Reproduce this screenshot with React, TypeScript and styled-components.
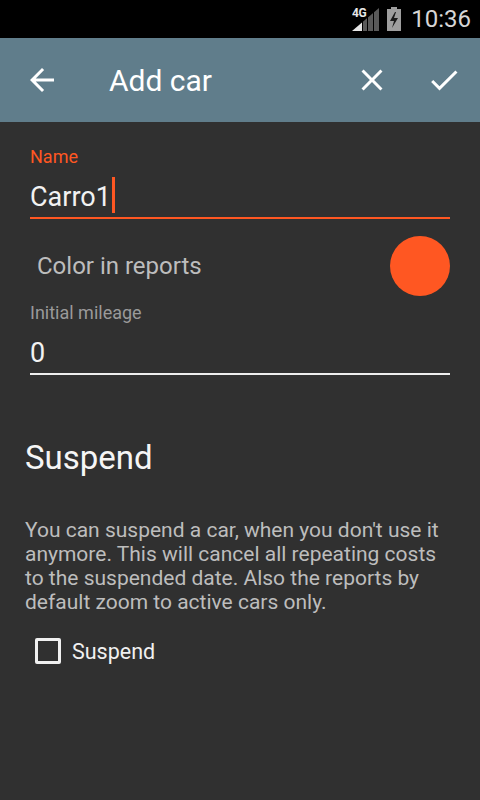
import styled, { createGlobalStyle } from 'styled-components';

const ACCENT = '#FF5722';

const GlobalStyle = createGlobalStyle`
  html, body {
    margin: 0;
    padding: 0;
    background: #303030;
  }
  body {
    font-family: Roboto, "Noto Sans", "Liberation Sans", sans-serif;
  }
`;

const Screen = styled.div`
  width: 480px;
  min-height: 800px;
  background: #303030;
  display: flex;
  flex-direction: column;
`;

const StatusBar = styled.div`
  height: 38px;
  background: #000;
  display: flex;
  align-items: center;
  justify-content: flex-end;
  padding-right: 9px;
  gap: 7px;
`;

const Clock = styled.span`
  color: #d6d6d6;
  font-size: 24px;
  margin-left: 3px;
`;

const Toolbar = styled.div`
  height: 84px;
  background: #607d8b;
  display: flex;
  align-items: center;
  padding: 0 18px 0 24px;
`;

const IconButton = styled.div<{ $gap?: number }>`
  width: 36px;
  height: 36px;
  display: flex;
  align-items: center;
  justify-content: center;
  margin-left: ${(p) => p.$gap ?? 0}px;
  svg {
    width: 36px;
    height: 36px;
    fill: #fff;
  }
`;

const Title = styled.h1`
  flex: 1;
  margin: 0 0 0 49px;
  font-size: 30px;
  font-weight: 400;
  color: #fff;
`;

const Content = styled.div`
  padding-top: 24px;
  display: flex;
  flex-direction: column;
`;

const Field = styled.div<{ $top?: number }>`
  margin: ${(p) => p.$top ?? 0}px 30px 0;
  display: flex;
  flex-direction: column;
`;

const FieldLabel = styled.label<{ $active?: boolean }>`
  font-size: 18px;
  line-height: 21px;
  color: ${(p) => (p.$active ? ACCENT : '#9a9a9a')};
`;

const FieldValue = styled.div<{ $active?: boolean }>`
  margin-top: 12px;
  padding-bottom: 2px;
  font-size: 27px;
  line-height: 36px;
  height: 36px;
  color: #f2f2f2;
  border-bottom: 2px solid ${(p) => (p.$active ? ACCENT : '#eeeeee')};
  display: flex;
  align-items: center;
`;

const Cursor = styled.span`
  display: inline-block;
  width: 3px;
  height: 36px;
  margin-left: 1px;
  margin-top: -4px;
  background: ${ACCENT};
`;

const ColorRow = styled.div`
  margin: 17px 30px 0;
  height: 60px;
  display: flex;
  align-items: center;
  justify-content: space-between;
`;

const ColorLabel = styled.span`
  padding-left: 7px;
  font-size: 24px;
  color: #bdbdbd;
`;

const ColorDot = styled.div<{ $color: string }>`
  width: 60px;
  height: 60px;
  border-radius: 50%;
  background: ${(p) => p.$color};
`;

const Section = styled.div`
  margin-top: 65px;
  padding: 0 25px;
  display: flex;
  flex-direction: column;
`;

const SectionTitle = styled.h2`
  margin: 0;
  font-size: 33px;
  line-height: 36px;
  font-weight: 400;
  color: #f5f5f5;
`;

const Description = styled.p`
  margin: 42px 0 0;
  max-width: 430px;
  font-size: 21px;
  line-height: 24px;
  color: #bdbdbd;
`;

const CheckRow = styled.label`
  margin-top: 24px;
  padding-left: 10px;
  display: flex;
  align-items: center;
  gap: 11px;
`;

const CheckBox = styled.span`
  width: 26px;
  height: 26px;
  box-sizing: border-box;
  border: 3px solid #f0f0f0;
  border-radius: 2px;
`;

const CheckLabel = styled.span`
  font-size: 21.5px;
  color: #f0f0f0;
`;

const SignalIcon = () => (
  <svg width="28" height="24" viewBox="0 0 28 24">
    <defs>
      <clipPath id="tri">
        <polygon points="0,24 27,24 27,1" />
      </clipPath>
    </defs>
    <g clipPath="url(#tri)">
      <rect x="0" y="0" width="10" height="24" fill="#e6e6e6" />
      <rect x="11" y="0" width="4" height="24" fill="#5a5a5a" />
      <rect x="16" y="0" width="5" height="24" fill="#5a5a5a" />
      <rect x="22" y="0" width="5" height="24" fill="#5a5a5a" />
    </g>
    <text x="0" y="10" fontSize="12" fontWeight="700" fill="#e6e6e6" fontFamily="Roboto, sans-serif" letterSpacing="-0.5">
      4G
    </text>
  </svg>
);

const BatteryIcon = () => (
  <svg width="14" height="24" viewBox="0 0 14 24">
    <rect x="4" y="0" width="6" height="3" fill="#9e9e9e" />
    <rect x="0" y="2" width="14" height="22" fill="#9e9e9e" />
    <polygon points="8,5 3,14 7,14 5,21 11,11 7,11 9,5" fill="#1a1a1a" />
  </svg>
);

const App = () => {
  return (
    <Screen>
      <GlobalStyle />
      <StatusBar>
        <SignalIcon />
        <BatteryIcon />
        <Clock>10:36</Clock>
      </StatusBar>
      <Toolbar>
        <IconButton>
          <svg viewBox="0 0 24 24">
            <path d="M20 11H7.83l5.59-5.59L12 4l-8 8 8 8 1.41-1.41L7.83 13H20v-2z" />
          </svg>
        </IconButton>
        <Title>Add car</Title>
        <IconButton>
          <svg viewBox="0 0 24 24">
            <path d="M19 6.41L17.59 5 12 10.59 6.41 5 5 6.41 10.59 12 5 17.59 6.41 19 12 13.41 17.59 19 19 17.59 13.41 12z" />
          </svg>
        </IconButton>
        <IconButton $gap={36}>
          <svg viewBox="0 0 24 24">
            <path d="M9 16.17L4.83 12l-1.42 1.41L9 19 21 7l-1.41-1.41z" />
          </svg>
        </IconButton>
      </Toolbar>
      <Content>
        <Field>
          <FieldLabel $active>Name</FieldLabel>
          <FieldValue $active>
            Carro1
            <Cursor />
          </FieldValue>
        </Field>
        <ColorRow>
          <ColorLabel>Color in reports</ColorLabel>
          <ColorDot $color={ACCENT} />
        </ColorRow>
        <Field $top={6}>
          <FieldLabel>Initial mileage</FieldLabel>
          <FieldValue>0</FieldValue>
        </Field>
        <Section>
          <SectionTitle>Suspend</SectionTitle>
          <Description>
            You can suspend a car, when you don't use it anymore. This will cancel all repeating costs to the
            suspended date. Also the reports by default zoom to active cars only.
          </Description>
          <CheckRow>
            <CheckBox />
            <CheckLabel>Suspend</CheckLabel>
          </CheckRow>
        </Section>
      </Content>
    </Screen>
  );
};

export default App;
